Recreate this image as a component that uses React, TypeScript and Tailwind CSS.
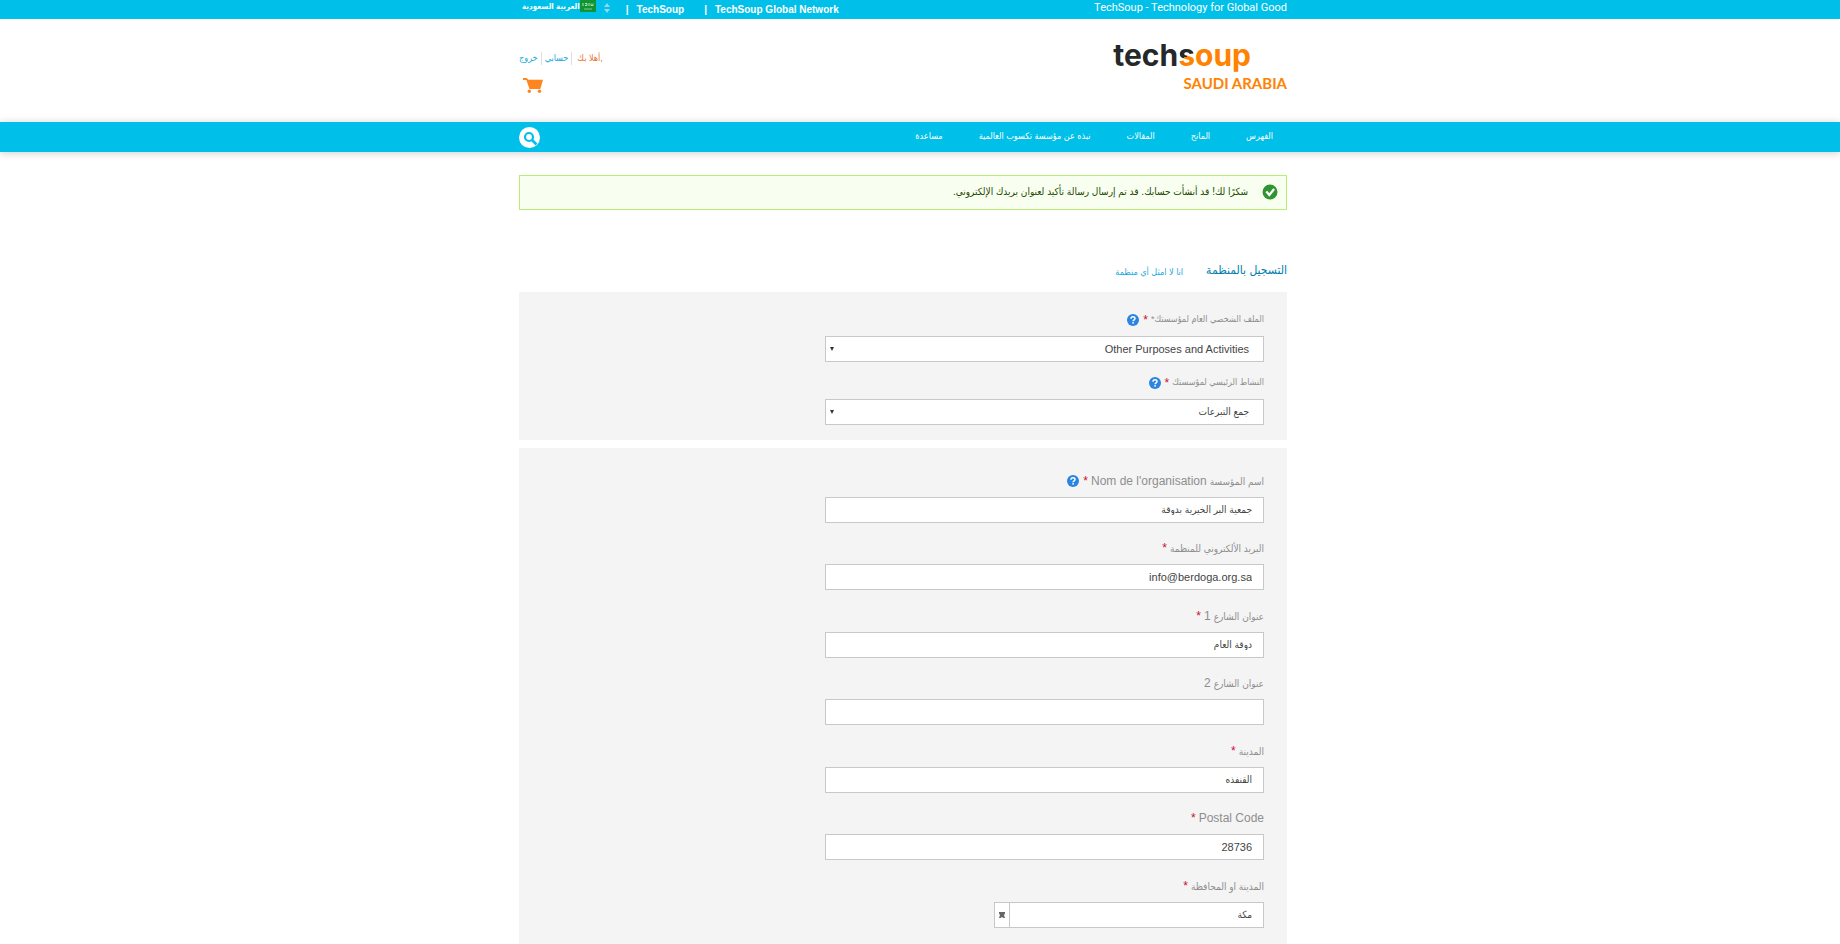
import type { ReactNode } from "react";

const NAV = ["الفهرس", "المانح", "المقالات", "نبذه عن مؤسسة تكسوب العالمية", "مساعدة"];

function HelpIcon() {
  return (
    <button type="button" aria-label="مساعدة" className="block h-3 w-3 shrink-0">
      <svg viewBox="0 0 12 12" className="h-3 w-3">
        <circle cx="6" cy="6" r="6" fill="#2a84e2" />
        <path d="M4 4.7C4 3.4 4.9 2.7 6 2.7s2 .7 2 1.8C8 5.8 6.1 5.8 6.1 7.3" fill="none" stroke="#fff" strokeWidth="1.5" />
        <rect x="5.3" y="8.1" width="1.6" height="1.5" fill="#fff" />
      </svg>
    </button>
  );
}

function Label({ id, children, required, help }: { id: string; children: ReactNode; required?: boolean; help?: boolean }) {
  return (
    <div className="flex h-4 items-center gap-1 text-[#8e8e8e]">
      <label htmlFor={id} className="flex items-center gap-[3px] whitespace-nowrap">
        {children}
        {required && <span className="text-xs text-[#c8102e]">*</span>}
      </label>
      {help && <HelpIcon />}
    </div>
  );
}

function SelectField({ id, label, value, latin }: { id: string; label: string; value: string; latin?: boolean }) {
  return (
    <div>
      <Label id={id} required help>
        <span className="text-[9px]">{label}</span>
      </Label>
      <div className="relative mt-2">
        <select
          id={id}
          className={`block h-[26px] w-full appearance-none border border-[#c8c8c8] bg-white px-3.5 text-[#444] ${latin ? "text-[11px]" : "pb-0.5 text-[10px]"}`}
        >
          <option>{value}</option>
        </select>
        <svg viewBox="0 0 4 4" className="pointer-events-none absolute top-[11px] left-[5px] h-1 w-1">
          <path d="M0 0h4L2 4z" fill="#333" />
        </svg>
      </div>
    </div>
  );
}

type TextFieldProps = { id: string; label: ReactNode; value: string; required?: boolean; help?: boolean; latin?: boolean };

function TextField({ id, label, value, required, help, latin }: TextFieldProps) {
  return (
    <div className="odd:pb-[17px] even:pb-[18px]">
      <Label id={id} required={required} help={help}>
        {label}
      </Label>
      <input
        id={id}
        defaultValue={value}
        className={`mt-2 block h-[26px] w-full border border-[#c8c8c8] bg-white px-[11px] text-[#444] ${latin ? "text-[11px]" : "pb-0.5 text-[10px]"}`}
      />
    </div>
  );
}

function Ar({ children }: { children: ReactNode }) {
  return <span className="text-[10px]">{children}</span>;
}

function Container({ children, className = "" }: { children: ReactNode; className?: string }) {
  return <div className={`mx-auto w-full max-w-3xl ${className}`}>{children}</div>;
}

export default function App() {
  return (
    <div dir="rtl" className="h-screen overflow-hidden bg-white font-['Liberation_Sans','DejaVu_Sans_Condensed','DejaVu_Sans',sans-serif] text-[#444]">
      <div className="bg-[#00bfe8] pr-[34px] text-white">
        <Container className="flex h-[19px] items-start justify-between">
          <p className="font-['Roboto'] text-[11px] leading-[15px]">TechSoup - Technology for Global Good</p>
          <div dir="ltr" className="flex items-start text-[10px] font-bold leading-5">
            <button type="button" className="flex items-start pl-[3px]">
              <span className="text-[8px] leading-[13px]">العربية السعودية</span>
              <svg viewBox="0 0 16 12" className="h-3 w-4">
                <rect width="16" height="12" fill="#0f9632" />
                <path d="M3 3v3M5 3.500h2v2H5M9 3v3M11 3.500v2h2v-2" stroke="#d5eeda" fill="none" strokeWidth=".8" />
                <path d="M4 9h8" stroke="#7cc58c" />
              </svg>
              <svg viewBox="0 0 6 10" className="mt-[3px] ml-2 h-2.5 w-1.5">
                <path d="M0 4l3-4 3 4zM0 6l3 4 3-4z" fill="#8edbf0" />
              </svg>
            </button>
            <span className="ml-4">|</span>
            <a href="#" className="ml-2">TechSoup</a>
            <span className="ml-5">|</span>
            <a href="#" className="ml-2">TechSoup Global Network</a>
          </div>
        </Container>
      </div>

      <header className="pr-[34px]">
        <Container className="flex h-[103px] items-start justify-between">
          <a href="#" className="mt-[18px] block" dir="ltr">
            <span className="flex justify-end pr-9 font-['Inter'] text-[30px] leading-9 font-bold">
              <span className="text-[#25282a]">tech</span>
              <span className="bg-linear-[160deg,#25282a_54%,#ff8200_54%] bg-clip-text text-transparent">s</span>
              <span className="text-[#ff8200]">oup</span>
            </span>
            <span className="block text-right font-['Lato'] text-[15px] leading-5 font-bold text-[#ff8200]">SAUDI ARABIA</span>
          </a>
          <div dir="ltr" className="mt-8">
            <div className="flex h-[15px] items-center text-[9px] text-[#1ba9dd]">
              <a href="#">خروج</a>
              <a href="#" className="ml-[3px] border-l border-[#ddd] pl-[3px]">حسابي</a>
              <span className="ml-[3px] border-l border-[#ddd] pl-[5px] text-[#e8742a]">أهلا بك,</span>
            </div>
            <a href="#" aria-label="سلة" className="mt-3 ml-1 block w-5">
              <svg viewBox="0 0 20 16" className="h-4 w-5" fill="#ff8520">
                <path d="M0 0h3.500l2 1.800H20L17.300 11H6.500L3.400 2H0z" />
                <circle cx="6.3" cy="13.3" r="1.7" />
                <circle cx="16.5" cy="13.3" r="1.7" />
              </svg>
            </a>
          </div>
        </Container>
      </header>

      <nav className="relative bg-[#00bfe8] pr-[34px] shadow-[0_1px_8px_rgba(0,0,0,0.2)]">
        <Container className="flex h-[30px] items-center justify-between">
          <ul className="flex gap-9 pr-3.5 text-[9px] text-white">
            {NAV.map((item) => (
              <li key={item}>
                <a href="#">{item}</a>
              </li>
            ))}
          </ul>
          <button type="button" aria-label="بحث">
            <svg viewBox="0 0 21 21" className="h-[21px] w-[21px]" fill="none">
              <circle cx="10.5" cy="10.5" r="10.5" fill="#fff" />
              <circle cx="10" cy="10" r="4" stroke="#00bfe8" strokeWidth="2.2" />
              <path d="M13 13l4.500 4.500" stroke="#00bfe8" strokeWidth="2.6" />
            </svg>
          </button>
        </Container>
      </nav>

      <main className="pr-[34px]">
        <Container className="pt-[23px]">
          <div role="status" className="flex h-[35px] items-center gap-3.5 border border-[#be7] bg-[#f8fff0] pr-2 pb-0.5 text-[10px] text-[#234600]">
            <svg viewBox="0 0 16 16" className="h-4 w-4" fill="none">
              <circle cx="8" cy="8" r="7.5" fill="#2f9432" />
              <path d="M4.300 7.600l3 3.400 4.800-6" stroke="#fff" strokeWidth="2.2" />
            </svg>
            <p>شكرًا لك! قد أنشأت حسابك. قد تم إرسال رسالة تأكيد لعنوان بريدك الإلكتروني.</p>
          </div>

          <div className="mt-[50px] flex h-8 items-start gap-[23px]">
            <h1 className="text-xs leading-5 text-[#007dad]">التسجيل بالمنظمة</h1>
            <a href="#" className="text-[9px] leading-6 text-[#1ba9dd]">انا لا امثل أي منظمة</a>
          </div>

          <form>
            <section className="bg-[#f4f4f4] pt-5 pr-[23px] pb-[15px]">
              <div className="flex w-[439px] flex-col gap-[13px]">
                <SelectField id="profile" label="الملف الشخصي العام لمؤسستك*" value="Other Purposes and Activities" latin />
                <SelectField id="activity" label="النشاط الرئيسي لمؤسستك" value="جمع التبرعات" />
              </div>
            </section>

            <section className="mt-2 bg-[#f4f4f4] pt-[25px] pr-[23px] pb-10">
              <div className="w-[439px]">
                <TextField id="name" label={<><Ar>اسم المؤسسة</Ar> <span className="text-xs">Nom de l'organisation</span></>} value="جمعية البر الخيرية بدوقة" required help />
                <TextField id="email" label={<Ar>البريد الألكتروني للمنظمة</Ar>} value="info@berdoga.org.sa" required latin />
                <TextField id="street1" label={<><Ar>عنوان الشارع</Ar> <span className="text-xs">1</span></>} value="دوقة العام" required />
                <TextField id="street2" label={<><Ar>عنوان الشارع</Ar> <span className="text-xs">2</span></>} value="" />
                <TextField id="city" label={<Ar>المدينة</Ar>} value="القنفذه" required />
                <TextField id="postal" label={<span className="text-xs">Postal Code</span>} value="28736" required latin />
                <div>
                  <Label id="region" required>
                    <Ar>المدينة او المحافظة</Ar>
                  </Label>
                  <div className="mt-2 flex">
                    <input id="region" defaultValue="مكة" className="h-[26px] w-[255px] border border-[#c8c8c8] bg-white px-[11px] pb-0.5 text-[10px] text-[#444]" />
                    <button type="button" aria-label="فتح القائمة" className="flex h-[26px] w-[15px] items-center justify-center border border-r-0 border-[#c8c8c8] bg-white">
                      <svg viewBox="0 0 6 6" className="h-1.5 w-1.5">
                        <path d="M0 0h6v1.500L5 3l1 3H4.500L3 5 1.500 6H0l1-3-1-1.500z" fill="#666" />
                      </svg>
                    </button>
                  </div>
                </div>
              </div>
            </section>
          </form>
        </Container>
      </main>
    </div>
  );
}
